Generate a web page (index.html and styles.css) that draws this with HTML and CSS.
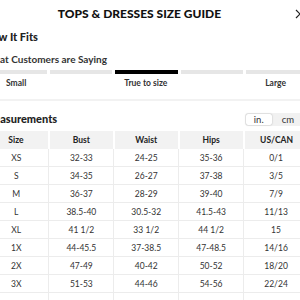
FILE: index.html
```html
<!DOCTYPE html>
<html>
<head>
<meta charset="utf-8">
<link rel="stylesheet" href="styles.css">
</head>
<body>
<div class="modal">
  <header class="head">
    <h1 class="title">TOPS &amp; DRESSES SIZE GUIDE</h1>
    <svg class="close" width="10" height="10" viewBox="0 0 10 10"><path d="M1 1 L9 9 M9 1 L1 9" stroke="#222" stroke-width="1.2" fill="none"/></svg>
  </header>
  <h2 class="h2">How It Fits</h2>
  <div class="sub">What Customers are Saying</div>
  <div class="bars">
    <span class="bar"></span><span class="bar"></span><span class="bar on"></span><span class="bar"></span><span class="bar"></span>
  </div>
  <div class="labels">
    <span>Small</span><span>True to size</span><span>Large</span>
  </div>
  <div class="divider"></div>
  <div class="mhead">
    <h2 class="h2">Measurements</h2>
    <div class="toggle"><span class="opt sel">in.</span><span class="opt">cm</span></div>
  </div>
  <table class="tbl">
    <thead>
      <tr><th>Size</th><th>Bust</th><th>Waist</th><th>Hips</th><th>US/CAN</th></tr>
    </thead>
    <tbody>
      <tr><td>XS</td><td>32-33</td><td>24-25</td><td>35-36</td><td>0/1</td></tr>
      <tr><td>S</td><td>34-35</td><td>26-27</td><td>37-38</td><td>3/5</td></tr>
      <tr><td>M</td><td>36-37</td><td>28-29</td><td>39-40</td><td>7/9</td></tr>
      <tr><td>L</td><td>38.5-40</td><td>30.5-32</td><td>41.5-43</td><td>11/13</td></tr>
      <tr><td>XL</td><td>41 1/2</td><td>33 1/2</td><td>44 1/2</td><td>15</td></tr>
      <tr><td>1X</td><td>44-45.5</td><td>37-38.5</td><td>47-48.5</td><td>14/16</td></tr>
      <tr><td>2X</td><td>47-49</td><td>40-42</td><td>50-52</td><td>18/20</td></tr>
      <tr><td>3X</td><td>51-53</td><td>44-46</td><td>54-56</td><td>22/24</td></tr>
      <tr><td></td><td></td><td></td><td></td><td></td></tr>
    </tbody>
  </table>
</div>
</body>
</html>
```
FILE: styles.css
```css
html, body { margin: 0; padding: 0; background: #fff; overflow: hidden; }
body { font-family: "Lato", "Liberation Sans", sans-serif; color: #222; }
.modal { width: 325px; margin-left: -16px; position: relative; }
.head { height: 27px; display: flex; align-items: center; justify-content: center; position: relative; padding-right: 14px; }
.title { margin: 0; font-size: 12px; font-weight: 900; color: #111; line-height: 15px; }
.close { position: absolute; left: 311px; top: 9px; }
.h2 { margin: 0; font-size: 11px; font-weight: 900; color: #222; line-height: 14px; }
.head + .h2 { margin-top: 3px; }
.sub { margin-top: 8px; font-size: 10px; font-weight: 700; line-height: 14px; color: #333; }
.bars { display: flex; gap: 3px; margin-top: 4px; }
.bar { flex: 1; height: 4px; background: #e6e6e6; }
.bar.on { background: #000; }
.labels { display: flex; justify-content: space-between; padding: 0 23px 0 22px; margin-top: 3px; font-size: 8.5px; font-weight: 700; line-height: 12px; color: #333; }
.divider { height: 2px; background: #f2f2f2; margin-top: 10px; }
.mhead { display: flex; align-items: center; justify-content: space-between; margin-top: 11px; height: 14px; }
.toggle { display: flex; background: #f1f1f1; border-radius: 3px; padding: 1px; margin-right: 4px; }
.opt { font-size: 9.5px; line-height: 11px; padding: 0 10px; color: #333; }
.opt.sel { background: #fff; border-radius: 2px; box-shadow: 0 0 1.5px rgba(0,0,0,0.35); padding: 0 8px; }
.tbl { width: 325px; border-collapse: collapse; margin-top: 5px; table-layout: fixed; }
.tbl th, .tbl td { height: 17px; padding: 0; text-align: center; font-size: 8.5px; }
.tbl th { height: 18px; background: #f2f2f2; font-weight: 700; color: #222; border-left: 2px solid #fff; }
.tbl th:first-child { border-left: 0; }
.tbl td { border: 1px solid #ececec; color: #333; font-weight: 400; }
.tbl td:first-child { border-left: 0; }
.tbl thead + tbody tr:first-child td { border-top: 0; }
```
